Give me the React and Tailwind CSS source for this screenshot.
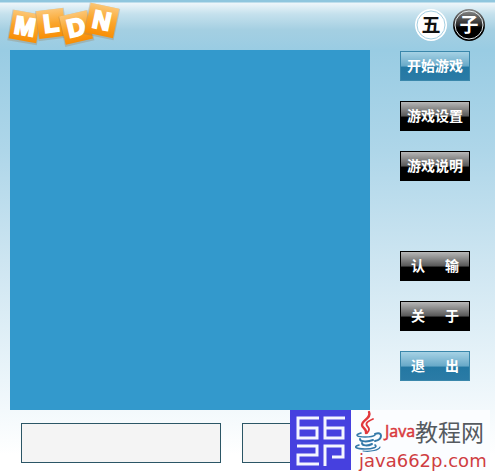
import React from "react";

const cjk = "font-['Liberation_Sans','Noto_Sans_CJK_SC',sans-serif]";

const tones = {
  blue: "border-[#3a87ab] bg-[linear-gradient(to_bottom,#a6d2e5_0%,#68a9c8_50%,#2478a3_54%,#2a7ba6_100%)]",
  black: "border-black bg-[linear-gradient(to_bottom,#b8b8b8_0%,#585858_50%,#000_54%,#000_100%)]",
};

function GameButton({ tone, words }) {
  return (
    <button
      type="button"
      className={`flex h-[30px] w-full items-center justify-center gap-5 border text-[14px] leading-[28px] font-bold whitespace-nowrap text-white ${tones[tone]}`}
    >
      {words.map((w) => (
        <span key={w}>{w}</span>
      ))}
    </button>
  );
}

function Logo() {
  const tiles = [
    { c: "M", x: 25, y: 26, r: 10, s: 28 },
    { c: "L", x: 51, y: 23, r: -7, s: 27 },
    { c: "D", x: 76, y: 27, r: -13, s: 28 },
    { c: "N", x: 102, y: 20, r: 12, s: 29 },
  ];
  return (
    <svg width="125" height="50" viewBox="0 0 125 50" role="img" aria-label="MLDN">
      <defs>
        <linearGradient id="tile" x1="0" y1="0" x2="0" y2="1">
          <stop offset="0" stopColor="#fcc675" />
          <stop offset="0.5" stopColor="#faa52b" />
          <stop offset="1" stopColor="#f88e05" />
        </linearGradient>
      </defs>
      {tiles.map((t) => (
        <g key={t.c} transform={`translate(${t.x} ${t.y}) rotate(${t.r})`}>
          <rect x={-t.s / 2 - 1} y={-t.s / 2} width={t.s + 2} height={t.s + 3} fill="#9a7b50" opacity="0.3" />
          <rect x={-t.s / 2} y={-t.s / 2} width={t.s} height={t.s + 1} fill="url(#tile)" />
          <text
            y="9"
            textAnchor="middle"
            fill="#fff"
            stroke="#fff"
            strokeWidth="2"
            fontFamily="Liberation Sans, sans-serif"
            fontSize="25"
            fontWeight="700"
          >
            {t.c}
          </text>
        </g>
      ))}
    </svg>
  );
}

function Stones() {
  return (
    <svg width="72" height="34" viewBox="0 0 72 34" role="img" aria-label="五子">
      <defs>
        <linearGradient id="stone" x1="0" y1="0" x2="0" y2="1">
          <stop offset="0" stopColor="#858585" />
          <stop offset="0.5" stopColor="#292929" />
          <stop offset="0.6" stopColor="#000" />
        </linearGradient>
      </defs>
      <circle cx="17" cy="17" r="16" fill="#fff" />
      <circle cx="17" cy="17" r="14" fill="#fff" stroke="#a5cfe2" strokeWidth="1" />
      <circle cx="55" cy="17" r="16" fill="url(#stone)" />
      <circle cx="55" cy="17" r="14" fill="url(#stone)" stroke="#e5edf0" strokeWidth="1" />
      <text x="17" y="24" textAnchor="middle" fill="#111" fontFamily="Noto Sans CJK SC, sans-serif" fontSize="19" fontWeight="700">五</text>
      <text x="55" y="24" textAnchor="middle" fill="#fff" fontFamily="Noto Sans CJK SC, sans-serif" fontSize="19" fontWeight="700">子</text>
    </svg>
  );
}

function SiteMark() {
  return (
    <svg width="61" height="60" viewBox="0 0 61 60" className="shrink-0 bg-[#4640df]" aria-hidden="true">
      <g fill="none" stroke="#f4f5ff" strokeWidth="3">
        <path d="M29 8H8V28H27V18H8" />
        <path d="M55 8H35V28H53V18H35" />
        <path d="M7 36H27V45H8V54H29" />
        <path d="M35 56V36H53V47H42" />
      </g>
    </svg>
  );
}

function JavaCup() {
  return (
    <svg width="30" height="42" viewBox="0 0 30 42" className="shrink-0" aria-hidden="true">
      <g fill="none" stroke="#e2383c" strokeLinecap="round">
        <path d="M14 2C17 8 7 10 7 15C7 18 12 19 11 23" strokeWidth="2.4" />
        <path d="M18 9C11 12 10 14 13 17C15 19 14 21 12 23" strokeWidth="1.8" />
      </g>
      <g fill="none" stroke="#3479a8" strokeLinecap="round">
        <path d="M6 23C-1 25 2 27 10 27C16 27 19 26 20 25" strokeWidth="1.6" />
        <path d="M20 24C28 21 28 29 20 31" strokeWidth="2" />
        <path d="M5 29C5 32 13 32 18 30" strokeWidth="2" />
        <path d="M7 33C7 36 13 36 17 34" strokeWidth="2" />
        <path d="M4 35C-3 37 2 39 10 39C18 39 23 37 20 35" strokeWidth="1.6" />
        <path d="M8 41C16 42 24 40 25 37" strokeWidth="1.2" />
      </g>
    </svg>
  );
}

function Watermark() {
  return (
    <aside className="absolute right-[5px] bottom-[5px] flex h-[60px] w-[200px] bg-[#fbfdff]">
      <SiteMark />
      <div className="flex flex-1 flex-col">
        <div className="flex h-[42px] pl-1">
          <JavaCup />
          <div className="flex items-center whitespace-nowrap">
            <span className="font-['Open_Sans',sans-serif] text-[16px] leading-[42px] text-[#d9393d] [-webkit-text-stroke:0.5px_#d9393d]">Java</span>
            <span className="font-['Noto_Sans_CJK_SC',sans-serif] text-[23px] leading-[46px] text-[#555a5f]">教程网</span>
          </div>
        </div>
        <a href="#java662p" className="pl-2 font-['DejaVu_Sans',sans-serif] text-[18px] leading-[18px] text-[#cf3d42]">
          java662p.com
        </a>
      </div>
    </aside>
  );
}

export default function App() {
  return (
    <div
      className={`relative min-h-screen w-full overflow-hidden bg-[linear-gradient(to_bottom,#8fc6de_0px,#8fc6de_2px,#eef6fa_3px,#c5e1ed_14px,#a4cfe2_30px,#99cce3_50px,#aed6e9_150px,#cde5f1_260px,#ebf5fa_380px,#fff_455px)] ${cjk}`}
    >
      <header className="flex h-[50px] items-start justify-between pr-[9px]">
        <Logo />
        <div className="pt-2">
          <Stones />
        </div>
      </header>
      <main className="flex pr-[25px] pl-[10px]">
        <section aria-label="棋盘" className="aspect-square flex-1 bg-[#3399cc]" />
        <nav className="ml-[30px] flex w-[70px] flex-col gap-[70px] pt-px">
          <div className="flex flex-col gap-5">
            <GameButton tone="blue" words={["开始游戏"]} />
            <GameButton tone="black" words={["游戏设置"]} />
            <GameButton tone="black" words={["游戏说明"]} />
          </div>
          <div className="flex flex-col gap-5">
            <GameButton tone="black" words={["认", "输"]} />
            <GameButton tone="black" words={["关", "于"]} />
            <GameButton tone="blue" words={["退", "出"]} />
          </div>
        </nav>
      </main>
      <footer className="flex gap-[21px] pt-[13px] pr-[53px] pb-3 pl-[21px]">
        <input readOnly aria-label="黑方" className="h-10 min-w-0 flex-1 border border-[#2b5666] bg-[#f4f4f4]" />
        <input readOnly aria-label="白方" className="h-10 min-w-0 flex-1 border border-[#2b5666] bg-[#f4f4f4]" />
      </footer>
      <Watermark />
    </div>
  );
}
